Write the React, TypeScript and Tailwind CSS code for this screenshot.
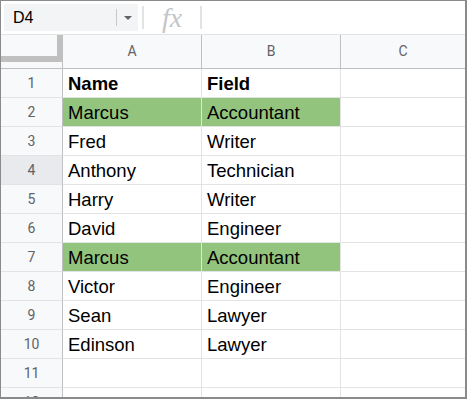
const rows: [string, string][] = [
  ['Name', 'Field'],
  ['Marcus', 'Accountant'],
  ['Fred', 'Writer'],
  ['Anthony', 'Technician'],
  ['Harry', 'Writer'],
  ['David', 'Engineer'],
  ['Marcus', 'Accountant'],
  ['Victor', 'Engineer'],
  ['Sean', 'Lawyer'],
  ['Edinson', 'Lawyer'],
  ['', ''],
  ['', ''],
];

const green = new Set([2, 7]);

export default function App() {
  return (
    <div className="w-[467px] h-[399px] bg-white overflow-hidden border-t border-l border-r-2 border-b-2 border-[#8a8a8a] flex flex-col">
      {/* Formula bar */}
      <div className="h-[34px] shrink-0 border-b border-[#e2e3e3] flex items-start pl-[3px] pt-[3px]">
        <div className="flex h-[27px] bg-[#f3f4f5]">
          <div className="w-[112px] flex items-center pl-[9px] text-[16px] text-black font-['Liberation_Sans',Arial,sans-serif]">
            D4
          </div>
          <div className="w-px bg-[#c8c8c8] my-[5px]" />
          <div className="w-[21px] flex items-center justify-center">
            <svg width="8" height="4" viewBox="0 0 8 4">
              <path d="M0 0h8L4 4z" fill="#5f6368" />
            </svg>
          </div>
        </div>
        <div className="ml-[4px] mt-[2px] w-[2px] h-[23px] bg-[#e2e3e3]" />
        <div className="w-[56px] h-[27px] flex items-center justify-center text-[28px] italic text-[#c4c6c8] font-['Liberation_Serif','Times_New_Roman',serif] leading-none">
          fx
        </div>
        <div className="mt-[2px] w-[2px] h-[23px] bg-[#e2e3e3]" />
      </div>

      {/* Column headers */}
      <div className="h-[34px] shrink-0 flex bg-[#f8f9fa] border-b border-[#c0c0c0] text-[14px] text-[#5f6368] font-['Roboto',sans-serif]">
        <div className="w-[62px] shrink-0 relative border-r border-[#c0c0c0]">
          <div className="absolute right-[0px] top-0 w-[5px] h-[27px] bg-[#c0c0c0]" />
          <div className="absolute left-0 top-[21px] w-[61px] h-[6px] bg-[#c0c0c0]" />
        </div>
        <div className="w-[139px] shrink-0 border-r border-[#c0c0c0] flex items-center justify-center">A</div>
        <div className="w-[139px] shrink-0 border-r border-[#c0c0c0] flex items-center justify-center">B</div>
        <div className="flex-1 flex items-center justify-center">C</div>
      </div>

      {/* Grid */}
      <div className="flex flex-col">
        {rows.map(([a, b], i) => {
          const n = i + 1;
          const fill = green.has(n) ? 'bg-[#93c47d]' : 'bg-white';
          const bold = n === 1 ? 'font-bold' : '';
          return (
            <div key={n} className="h-[29px] shrink-0 flex">
              <div
                className={`w-[62px] shrink-0 border-r border-b border-r-[#c0c0c0] border-b-[#e2e3e3] flex items-center justify-center text-[14px] text-[#5f6368] font-['Roboto',sans-serif] ${
                  n === 4 ? 'bg-[#e8eaed]' : 'bg-[#f8f9fa]'
                }`}
              >
                {n}
              </div>
              <div
                className={`w-[139px] shrink-0 border-r border-b border-[#e2e3e3] ${fill} ${bold} flex items-end pl-[5px] pb-[3px] text-[18.5px] leading-[21px] text-black font-['Liberation_Sans',Arial,sans-serif]`}
              >
                {a}
              </div>
              <div
                className={`w-[139px] shrink-0 border-r border-b border-[#e2e3e3] ${fill} ${bold} flex items-end pl-[5px] pb-[3px] text-[18.5px] leading-[21px] text-black font-['Liberation_Sans',Arial,sans-serif]`}
              >
                {b}
              </div>
              <div className="flex-1 border-b border-[#e2e3e3]" />
            </div>
          );
        })}
      </div>
    </div>
  );
}
